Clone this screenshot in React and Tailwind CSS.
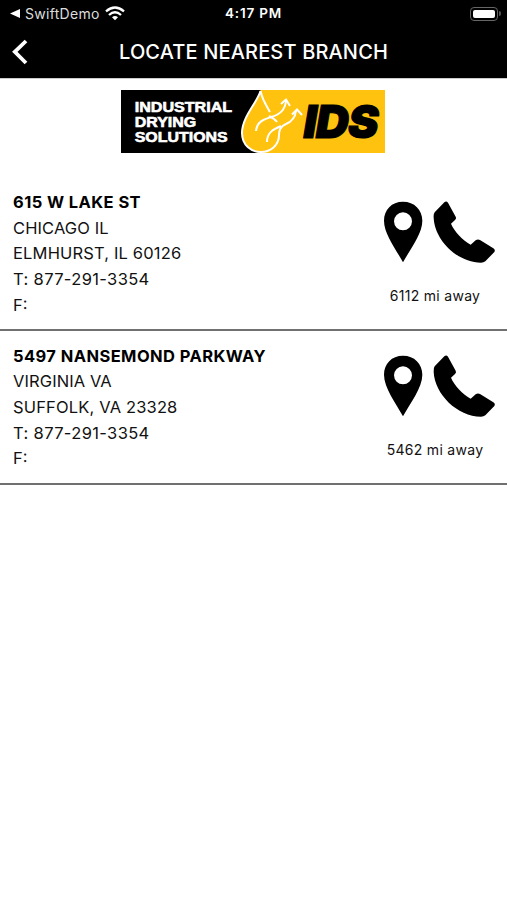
const branches = [
  { name: "615 W LAKE ST", area: "CHICAGO IL", city: "ELMHURST, IL 60126", phone: "877-291-3354", distance: "6112 mi away" },
  { name: "5497 NANSEMOND PARKWAY", area: "VIRGINIA VA", city: "SUFFOLK, VA 23328", phone: "877-291-3354", distance: "5462 mi away" },
];

function Wifi() {
  return (
    <svg className="ml-[5px] h-[15px] w-5" viewBox="0 0 60 45" fill="none" stroke="white" strokeWidth="7">
      <path d="M3 16 Q30 -7 57 16" />
      <path d="M12 27 Q30 11 48 27" />
      <path d="M21 34 Q30 26 39 34 L30 43Z" fill="white" stroke="none" />
    </svg>
  );
}

function Logo() {
  return (
    <svg className="h-[63px] w-[264px]" viewBox="0 0 264 63" role="img" aria-label="Industrial Drying Solutions">
      <path d="M0 0H264V63H0Z" fill="#000" />
      <path d="M139.5 0H264V63H140C130 62 121 55 121 43C121 27 136 13 139.5 0Z" fill="#ffc20e" />
      <g fill="white" stroke="white" strokeWidth="0.6" fontFamily="'Liberation Sans', Arial, sans-serif" fontWeight="700" fontSize="14.4">
        <text x="13.7" y="22" textLength="97.5" lengthAdjust="spacingAndGlyphs">INDUSTRIAL</text>
        <text x="13.7" y="36.8" textLength="61.5" lengthAdjust="spacingAndGlyphs">DRYING</text>
        <text x="13.7" y="51.6" textLength="93" lengthAdjust="spacingAndGlyphs">SOLUTIONS</text>
      </g>
      <g fill="none" stroke="white" strokeWidth="2">
        <path d="M139.5 1C136 13 121 27 121 43C121 55 130 62 140 62C150 62 158 55 158 45C158 40 160 36 165 34C170 32 174 29 175 21" />
        <path d="M139.5 1C141 9 145 15 149 22" />
        <path d="M135 41C136 31 144 29 150 27C158 25 164 21 165 11" />
        <path d="M148 26C152 28 154 29 156 32" />
        <path d="M146 52C146 42 153 39 160 36" />
        <path d="M160 14L165 9.5L169 16M171 24.5L176 19.5L181 25" />
      </g>
      <text x="182.5" y="47.8" fill="black" stroke="black" strokeWidth="1.2" fontFamily="Inter, 'Liberation Sans', sans-serif" fontWeight="900" fontStyle="italic" fontSize="46" textLength="74" lengthAdjust="spacingAndGlyphs" letterSpacing="-1">IDS</text>
    </svg>
  );
}

function PinIcon() {
  return (
    <svg className="h-16 w-10" viewBox="39 30 120 192">
      <path fillRule="evenodd" d="M99 35C65 35 42 59 42 92C42 132 78 178 99 217C120 178 157 132 157 92C157 59 133 35 99 35ZM99 67A27 27 0 1 1 99 121A27 27 0 1 1 99 67Z" />
    </svg>
  );
}

function PhoneIcon() {
  return (
    <svg className="h-16 w-[63px]" viewBox="189 30 189 192">
      <path d="M194 67L223 37Q229 32 234 38L257 80Q260 86 255 90L243 101C253 124 276 149 302 164L317 151Q323 147 330 150L370 175Q377 180 373 186L346 214Q341 218 333 218C262 217 194 151 191 83Q190 72 194 67Z" />
    </svg>
  );
}

function Branch({ branch }) {
  return (
    <article className="flex h-[153.8px] items-start justify-between border-b-2 border-[#707070] pl-[13px] pr-[11px]">
      <div className="pt-[12.8px] text-[16.5px] leading-[25.7px] whitespace-nowrap">
        <h2 className="font-bold tracking-[0.42px] text-black">{branch.name}</h2>
        <p className="tracking-[0.1px]">{branch.area}</p>
        <p className="tracking-[0.16px]">{branch.city}</p>
        <p className="tracking-[0.36px]">T: {branch.phone}</p>
        <p>F:</p>
      </div>
      <div className="flex w-[113px] flex-col pt-[23px]">
        <div className="flex gap-[10px]"><PinIcon /><PhoneIcon /></div>
        <p className="mt-[22px] w-[104px] text-center text-[14px] leading-5 tracking-[0.3px] whitespace-nowrap">{branch.distance}</p>
      </div>
    </article>
  );
}

export default function App() {
  return (
    <div className="min-h-[900px] w-[507px] overflow-hidden bg-white font-['Inter','Liberation_Sans',sans-serif] text-[#111]">
      <header className="h-[78px] bg-black text-white">
        <div className="grid h-[27px] grid-cols-3 items-center">
          <div className="flex items-center pl-[10px] text-[14px] text-[#ddd]">
            <svg className="mr-[5px] h-[9px] w-[10px]" viewBox="0 0 10 9"><path d="M0 4.5L10 0V9Z" fill="white" /></svg>
            <span className="tracking-[0.3px]">SwiftDemo</span><Wifi />
          </div>
          <span className="text-center text-[13.5px] font-semibold tracking-[0.8px]">4:17 PM</span>
          <div className="flex items-center justify-end pr-[6px]">
            <div className="h-[14px] w-[28px] rounded-[4px] border border-[#666] p-[2px]"><div className="h-full rounded-[2px] bg-white" /></div>
            <div className="ml-px h-[5px] w-[2px] rounded-r-full bg-[#555]" />
          </div>
        </div>
        <div className="grid h-[49px] grid-cols-[40px_1fr_40px] items-center">
          <svg className="ml-[12px] h-[26px] w-4" viewBox="0 0 16 26" fill="none" stroke="white" strokeWidth="3.8"><path d="M14 2L2.8 12.8L14 24" /></svg>
          <h1 className="text-center text-[20px] font-medium tracking-[0.15px] whitespace-nowrap">LOCATE NEAREST BRANCH</h1>
        </div>
      </header>
      <div className="flex h-[99px] justify-center border-t border-[#ccc] pt-[11px] pr-px"><Logo /></div>
      <main>{branches.map((branch) => <Branch key={branch.name} branch={branch} />)}</main>
    </div>
  );
}
